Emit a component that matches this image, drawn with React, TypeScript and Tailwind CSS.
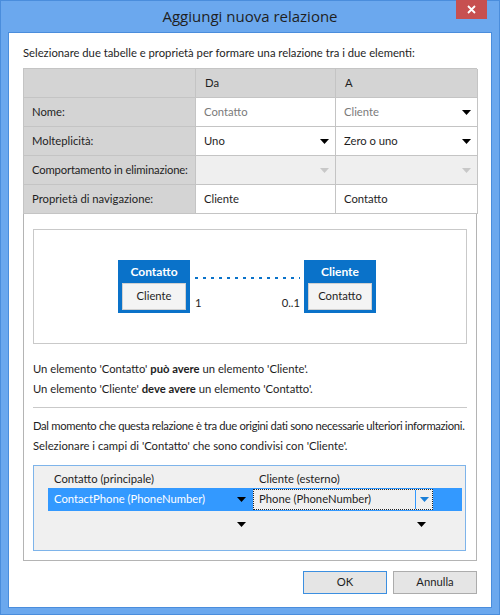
import React from "react";

const font = "font-['Lato','Open_Sans',sans-serif]";

function Caret({ color = "#000" }: { color?: string }) {
  return (
    <svg width="9" height="5" viewBox="0 0 9 5">
      <path d="M0 0 H9 L4.5 5 Z" fill={color} />
    </svg>
  );
}

function LabelCell({ children }: { children: React.ReactNode }) {
  return (
    <div className="flex h-[29px] items-center whitespace-nowrap border-b border-r border-[#c4c4c4] bg-[#d4d4d4] px-[8px] text-[#1e1e1e]">
      {children}
    </div>
  );
}

function ValueCell({
  text,
  muted,
  caret,
  disabled,
}: {
  text?: string;
  muted?: boolean;
  caret?: boolean;
  disabled?: boolean;
}) {
  return (
    <div
      className={[
        "flex h-[29px] items-center justify-between border-b border-r border-[#c4c4c4] pl-[8px] pr-[6px]",
        disabled ? "bg-[#efefef]" : "bg-white",
      ].join(" ")}
    >
      <span className={muted ? "text-[#7a7a7a]" : "text-[#1e1e1e]"}>{text}</span>
      {caret && <Caret color={disabled ? "#c8c8c8" : "#000"} />}
    </div>
  );
}

function Entity({ title, field }: { title: string; field: string }) {
  return (
    <div className="flex h-[53px] w-[72px] flex-col bg-[#0a72c9] px-[4px] pb-[3px]">
      <div className="flex h-[23px] items-center justify-center text-[12px] font-bold text-white">
        {title}
      </div>
      <div className="flex flex-1 items-center justify-center border border-[#d0d0d0] bg-[#f4f4f4] text-[#1e1e1e]">
        {field}
      </div>
    </div>
  );
}

export default function App() {
  return (
    <div
      className={`${font} flex h-[615px] w-[500px] flex-col border border-[#4a8ddc] bg-[#6ba8ee] text-[11.25px]`}
    >
      {/* Title bar */}
      <div className="relative flex h-[31px] shrink-0 items-center justify-center">
        <span className="font-['Open_Sans',sans-serif] text-[15px] text-[#1f1f1f]">
          Aggiungi nuova relazione
        </span>
        <div className="absolute right-[12px] top-[-1px] flex h-[19px] w-[31px] items-center justify-center bg-[#c75050]">
          <svg width="9" height="9" viewBox="0 0 9 9">
            <path d="M1 1 L8 8 M8 1 L1 8" stroke="#fff" strokeWidth="1.8" />
          </svg>
        </div>
      </div>

      {/* Client area */}
      <div className="mx-[7px] mb-[6px] flex flex-1 flex-col border border-[#4a8ddc] bg-white px-[14px] pt-[12px] text-[#1e1e1e]">
        <div className="h-[23px] leading-[16px]">
          Selezionare due tabelle e proprietà per formare una relazione tra i due elementi:
        </div>

        {/* Properties table */}
        <div className="grid grid-cols-[172px_140px_142px] border-l border-t border-[#c4c4c4]">
          <div className="h-[29px] border-b border-r border-[#c4c4c4] bg-[#d4d4d4]" />
          <div className="flex h-[29px] items-center border-b border-r border-[#c4c4c4] bg-[#d4d4d4] px-[9px]">
            Da
          </div>
          <div className="flex h-[29px] items-center border-b border-r border-[#c4c4c4] bg-[#d4d4d4] px-[9px]">
            A
          </div>

          <LabelCell>Nome:</LabelCell>
          <ValueCell text="Contatto" muted />
          <ValueCell text="Cliente" muted caret />

          <LabelCell>Molteplicità:</LabelCell>
          <ValueCell text="Uno" caret />
          <ValueCell text="Zero o uno" caret />

          <LabelCell>
            <span className="tracking-[-0.15px]">Comportamento in eliminazione:</span>
          </LabelCell>
          <ValueCell caret disabled />
          <ValueCell caret disabled />

          <LabelCell>Proprietà di navigazione:</LabelCell>
          <ValueCell text="Cliente" />
          <ValueCell text="Contatto" />
        </div>

        {/* Lower panel */}
        <div className="flex flex-col border-x border-b border-[#b4b4b4] px-[9px] pb-[9px] pt-[15px]">
          {/* Diagram */}
          <div className="flex h-[115px] items-center justify-center border border-[#c9c9c9] pr-[6px]">
            <Entity title="Contatto" field="Cliente" />
            <div className="flex h-[53px] w-[114px] flex-col px-[4px]">
              <svg width="106" height="36" viewBox="0 0 106 36">
                <line x1="1" y1="18" x2="106" y2="18" stroke="#0a72c9" strokeWidth="2.2" strokeDasharray="3 5" />
              </svg>
              <div className="flex justify-between pl-[1px] leading-[14px]">
                <span>1</span>
                <span>0..1</span>
              </div>
            </div>
            <Entity title="Cliente" field="Contatto" />
          </div>

          <div className="mt-[17px] flex flex-col gap-[4px] leading-[16px]">
            <div>
              Un elemento 'Contatto' <b>può avere</b> un elemento 'Cliente'.
            </div>
            <div>
              Un elemento 'Cliente' <b>deve avere</b> un elemento 'Contatto'.
            </div>
          </div>

          <div className="my-[10px] border-t border-[#c9c9c9]" />

          <div className="flex flex-col gap-[4px] leading-[16px]">
            <div className="whitespace-nowrap tracking-[-0.32px]">
              Dal momento che questa relazione è tra due origini dati sono necessarie ulteriori
              informazioni.
            </div>
            <div>Selezionare i campi di 'Contatto' che sono condivisi con 'Cliente'.</div>
          </div>

          {/* Field mapping grid */}
          <div className="mr-[1px] mt-[11px] flex h-[86px] flex-col border border-[#7eb4ea] bg-[#f0f0f0] pl-[14px] pr-[3px] pt-[5px]">
            <div className="flex h-[17px] items-center">
              <div className="w-[205px] pl-[6px]">Contatto (principale)</div>
              <div className="pl-[6px]">Cliente (esterno)</div>
            </div>
            <div className="flex h-[23px] items-center bg-[#3399ff]">
              <div className="flex h-full w-[203px] items-center justify-between pl-[6px] pr-[5px] text-white">
                <span>ContactPhone (PhoneNumber)</span>
                <Caret />
              </div>
              <div className="ml-[2px] flex h-[21px] w-[180px] items-center border border-dotted border-[#222] bg-[#f0f0f0]">
                <span className="flex-1 pl-[5px]">Phone (PhoneNumber)</span>
                <div className="flex h-full w-[17px] items-center justify-center border-l border-[#3399ff]">
                  <Caret color="#1a7fd8" />
                </div>
              </div>
            </div>
            <div className="flex h-[26px] items-center">
              <div className="flex w-[203px] justify-end pr-[5px]">
                <Caret />
              </div>
              <div className="ml-[2px] flex w-[180px] justify-end pr-[7px]">
                <Caret />
              </div>
            </div>
          </div>
        </div>

        {/* Buttons */}
        <div className="mt-[10px] flex justify-end gap-[6px]">
          <button className="flex h-[23px] w-[84px] items-center justify-center border border-[#3c8fe0] bg-[#e5e5e5] text-[#1e1e1e]">
            OK
          </button>
          <button className="flex h-[23px] w-[84px] items-center justify-center border border-[#acacac] bg-[#e5e5e5] text-[#1e1e1e]">
            Annulla
          </button>
        </div>
      </div>
    </div>
  );
}
